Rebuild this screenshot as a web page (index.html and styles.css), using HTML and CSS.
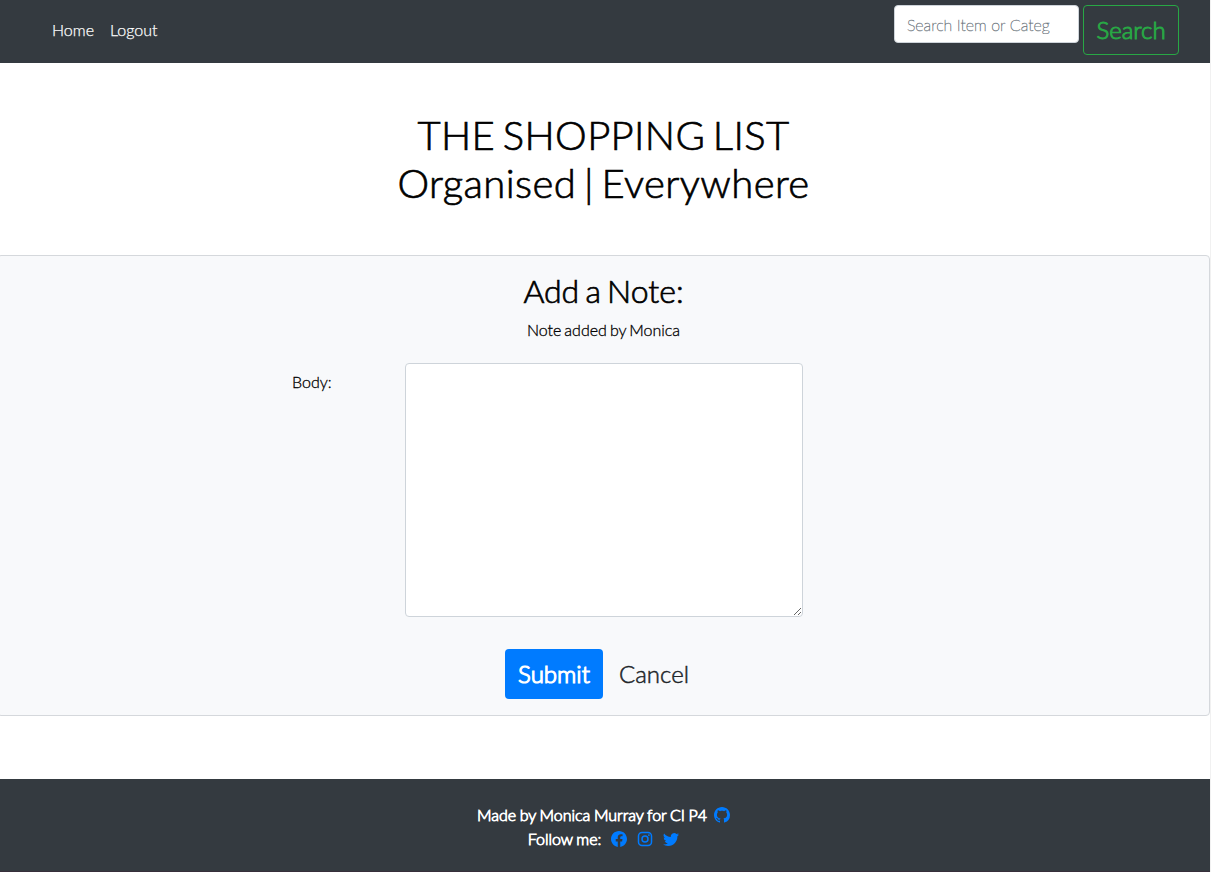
FILE: index.html
```html
<!DOCTYPE html>
<html lang="en">
<head>
<meta charset="utf-8">
<title>The Shopping List</title>
<link rel="stylesheet" href="styles.css">
</head>
<body>
<div class="page">
  <nav class="navbar">
    <div class="nav-links"><a href="#">Home</a><a href="#">Logout</a></div>
    <form class="search">
      <input class="search-input" type="text" placeholder="Search Item or Categ">
      <button class="btn btn-search" type="button">Search</button>
    </form>
  </nav>
  <header class="hero">
    <h1>THE SHOPPING LIST<br><span class="tagline">Organised | Everywhere</span></h1>
  </header>
  <main class="card">
    <h2>Add a Note:</h2>
    <p class="author">Note added by Monica</p>
    <div class="field">
      <label for="body">Body:</label>
      <textarea id="body"></textarea>
    </div>
    <div class="actions">
      <button class="btn btn-submit" type="button">Submit</button>
      <a class="btn btn-cancel" href="#">Cancel</a>
    </div>
  </main>
  <footer class="footer">
    <div class="footer-row"><span class="made">Made by Monica Murray for CI P4</span>
      <svg class="icon" viewBox="0 0 16 16"><path d="M8 0C3.58 0 0 3.58 0 8c0 3.54 2.29 6.53 5.47 7.59.4.07.55-.17.55-.38 0-.19-.01-.82-.01-1.49-2.01.37-2.53-.49-2.69-.94-.09-.23-.48-.94-.82-1.13-.28-.15-.68-.52-.01-.53.63-.01 1.08.58 1.23.82.72 1.21 1.87.87 2.33.66.07-.52.28-.87.51-1.07-1.78-.2-3.64-.89-3.64-3.95 0-.87.31-1.59.82-2.15-.08-.2-.36-1.02.08-2.12 0 0 .67-.21 2.2.82.64-.18 1.32-.27 2-.27s1.36.09 2 .27c1.53-1.04 2.2-.82 2.2-.82.44 1.1.16 1.92.08 2.12.51.56.82 1.27.82 2.15 0 3.07-1.87 3.75-3.65 3.95.29.25.54.73.54 1.48 0 1.07-.01 1.93-.01 2.2 0 .21.15.46.55.38A8.01 8.01 0 0 0 16 8c0-4.42-3.58-8-8-8z"/></svg>
    </div>
    <div class="footer-row"><span class="follow">Follow me:</span>
      <svg class="icon" viewBox="0 0 16 16"><path d="M16 8.05C16 3.6 12.42 0 8 0S0 3.6 0 8.05c0 4.02 2.93 7.35 6.75 7.95v-5.62H4.72V8.05h2.03V6.28c0-2.02 1.2-3.13 3.02-3.13.88 0 1.79.15 1.79.15v1.98h-1.01c-.99 0-1.3.62-1.3 1.26v1.51h2.22l-.35 2.33H9.25V16C13.07 15.4 16 12.07 16 8.05z"/></svg>
      <svg class="icon outlined" viewBox="0 0 16 16"><rect x="1.5" y="1.5" width="13" height="13" rx="3.5"/><circle cx="8" cy="8" r="3"/><circle class="dot" cx="11.9" cy="4.1" r=".9"/></svg>
      <svg class="icon" viewBox="0 0 16 16"><path d="M5.03 15c6.04 0 9.34-5 9.34-9.33q0-.22-.01-.43A6.7 6.7 0 0 0 16 3.54a6.5 6.5 0 0 1-1.89.52 3.3 3.3 0 0 0 1.45-1.82 6.5 6.5 0 0 1-2.09.79A3.28 3.28 0 0 0 7.88 6.03 9.32 9.32 0 0 1 1.11 2.6a3.29 3.29 0 0 0 1.02 4.38A3.3 3.3 0 0 1 .64 6.58v.04a3.29 3.29 0 0 0 2.63 3.22 3.2 3.2 0 0 1-.86.11 3 3 0 0 1-.62-.06 3.28 3.28 0 0 0 3.07 2.28A6.6 6.6 0 0 1 0 13.53 9.3 9.3 0 0 0 5.03 15z"/></svg>
    </div>
  </footer>
</div>
</body>
</html>
```
FILE: styles.css
```css
* { box-sizing: border-box; }
html { background: #fff; overflow: hidden; }
body { margin: 0; font-family: Lato, sans-serif; font-weight: 300; font-size: 16px; line-height: 1.5; color: #000; border-right: 1px solid #f1f1f1; height: 872px; overflow: hidden; }
.page { margin-left: -3px; display: flex; flex-direction: column; height: 872px; }
.navbar { flex: none; height: 63px; background: #343a40; display: flex; justify-content: space-between; padding: 5px 31px 0 55px; }
.nav-links { display: flex; gap: 16px; padding-top: 13px; }
.nav-links a { color: #fff; text-decoration: none; -webkit-text-stroke: .25px #fff; }
.search { display: flex; align-items: flex-start; gap: 4px; }
.search-input { width: 185px; height: 38px; padding: 6px 12px; border: 1px solid #ced4da; border-radius: 4px; font: 200 16px/24px Lato, sans-serif; background: #fff; }
.search-input::placeholder { color: #6c757d; opacity: 1; -webkit-text-stroke: .5px #6c757d; }
.btn { height: 50px; padding: 6px 12px; border: 1px solid transparent; border-radius: 4px; font: 300 24px/36px Lato, sans-serif; background: transparent; text-decoration: none; white-space: nowrap; }
.btn-search { width: 96px; color: #28a745; border-color: #28a745; -webkit-text-stroke: 1px #28a745; padding: 6px 0; }
.hero { flex: none; height: 192px; padding-top: 48px; text-align: center; }
h1, h2 { margin: 0; font-weight: 300; line-height: 1.2; -webkit-text-stroke: .7px #000; }
h1 { font-size: 40px; letter-spacing: .35px; word-spacing: -3.5px; }
.tagline { letter-spacing: .4px; word-spacing: -3.5px; }
.card { flex: none; height: 461px; border: 1px solid #d5d8dc; border-radius: 4px; background: #f8f9fb; padding-top: 16px; text-align: center; }
h2 { font-size: 32px; height: 38px; word-spacing: -2.5px; }
.author { margin: 8px 0 0; word-spacing: -1.3px; -webkit-text-stroke: .3px #000; }
.field { display: grid; grid-template-columns: 110px 398px; justify-content: start; padding: 21px 0 0 294px; }
.field label { text-align: left; padding-top: 7px; -webkit-text-stroke: .3px #000; }
.field textarea { margin-left: 3px; width: 398px; height: 254px; border: 1px solid #ced4da; border-radius: 4px; background: #fff; }
.actions { display: flex; gap: 3px; padding: 32px 0 0 507px; }
.btn-submit { width: 98px; background: #007bff; color: #fff; -webkit-text-stroke: 1.2px #fff; padding: 6px 0; }
.btn-cancel { color: #212529; -webkit-text-stroke: .5px #212529; }
.footer { flex: none; margin-top: 63px; height: 93px; background: #343a40; color: #fff; padding-top: 24px; border-bottom: 1px solid #372f3b; }
.footer-row { display: flex; justify-content: center; align-items: center; height: 24px; gap: 10px; word-spacing: -.8px; -webkit-text-stroke: .8px #fff; }
.made { margin-right: -3px; }
.icon { width: 16px; height: 16px; fill: #007bff; stroke: none; }
.outlined { fill: none; stroke: #007bff; stroke-width: 1.5; }
.dot { fill: #007bff; stroke: none; }
```
